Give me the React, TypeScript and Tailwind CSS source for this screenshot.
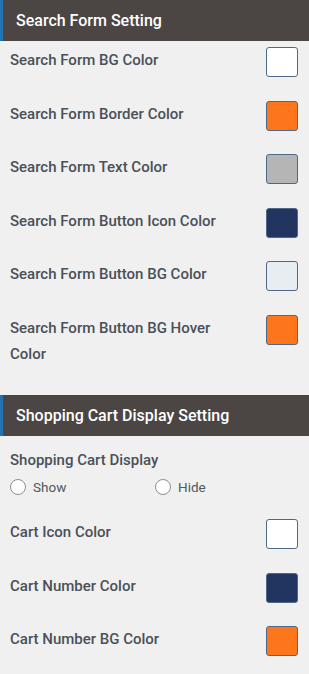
const searchRows = [
  { label: 'Search Form BG Color', color: '#ffffff' },
  { label: 'Search Form Border Color', color: '#fd761b' },
  { label: 'Search Form Text Color', color: '#b5b5b5' },
  { label: 'Search Form Button Icon Color', color: '#223460' },
  { label: 'Search Form Button BG Color', color: '#e8edf1' },
  { label: 'Search Form Button BG Hover Color', color: '#fd761b' },
];

const cartRows = [
  { label: 'Cart Icon Color', color: '#ffffff' },
  { label: 'Cart Number Color', color: '#223460' },
  { label: 'Cart Number BG Color', color: '#fd761b' },
];

function SectionHeader({ title }: { title: string }) {
  return (
    <div className="flex h-[41px] items-center border-l-[3px] border-[#2271b1] bg-[#4b4644] pl-[13px] text-[16px] font-medium text-white">
      {title}
    </div>
  );
}

function ColorRow({ label, color }: { label: string; color: string }) {
  return (
    <div className="flex items-start justify-between pb-[17.5px] pl-[10px] pr-[11px] pt-[6px]">
      <span className="max-w-[230px] text-[15px] font-medium leading-[26px] text-[#4a5058]">{label}</span>
      {/* swatch only — the picker itself isn't open */}
      <span
        className="h-[30px] w-[32px] shrink-0 rounded-[3px] border border-[#4f6886]"
        style={{ backgroundColor: color }}
      />
    </div>
  );
}

function Radio({ label }: { label: string }) {
  return (
    <label className="flex items-center gap-[7px] text-[13.5px] leading-[20px] text-[#50575e]">
      <span className="h-[16px] w-[16px] rounded-full border border-[#8c8f94] bg-white" />
      {label}
    </label>
  );
}

export default function App() {
  return (
    <div className="min-h-[674px] w-[309px] bg-[#f0f0f0] font-['Roboto',sans-serif]">
      <SectionHeader title="Search Form Setting" />
      {searchRows.map((r) => (
        <ColorRow key={r.label} {...r} />
      ))}
      <div className="h-[11px]" />
      <SectionHeader title="Shopping Cart Display Setting" />
      <div className="pl-[10px] pt-[11px]">
        <div className="text-[15px] font-medium leading-[26px] text-[#4a5058]">Shopping Cart Display</div>
        <div className="grid grid-cols-[145px_1fr] pt-[4px]">
          <Radio label="Show" />
          <Radio label="Hide" />
        </div>
      </div>
      <div className="h-[16px]" />
      {cartRows.map((r) => (
        <ColorRow key={r.label} {...r} />
      ))}
    </div>
  );
}
